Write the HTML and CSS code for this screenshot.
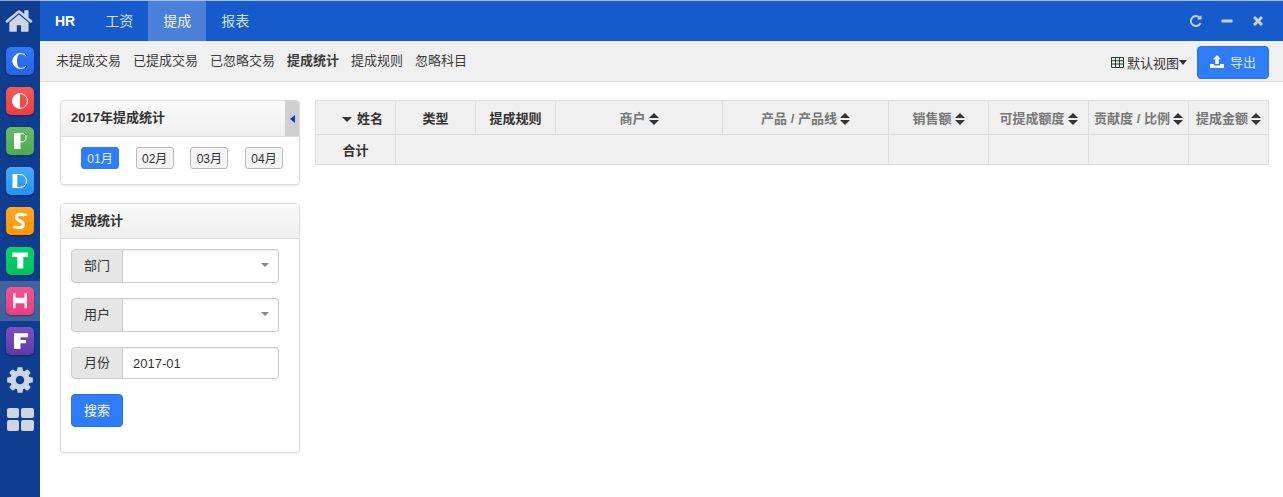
FILE: index.html
```html
<!DOCTYPE html>
<html lang="zh-CN">
<head>
<meta charset="utf-8">
<title>提成统计</title>
<link rel="stylesheet" href="styles.css">
</head>
<body>
<div class="app">
  <aside class="rail">
    <a class="rail-home">
      <svg class="home-icon" viewBox="0 0 1792 1792"><path d="M1408 992v480q0 26-19 45t-45 19h-384v-384h-256v384h-384q-26 0-45-19t-19-45v-480q0-1 .5-3t.5-3l575-474 575 474q1 2 1 6zm223-69l-62 74q-8 9-21 11h-3q-13 0-21-7l-692-577-692 577q-12 8-24 7-13-2-21-11l-62-74q-8-10-7-23.5t11-21.5l719-599q32-26 76-26t76 26l244 204v-195q0-14 9-23t23-9h192q14 0 23 9t9 23v408l219 182q10 8 11 21.5t-7 23.5z"/></svg>
    </a>
    <a class="rail-item"><span class="tile tile-blue"><svg viewBox="0 0 28 28"><path d="M20 9a7.500 7.500 0 1 0 0 10" class="ol"/><path d="M14 6.500a7.500 7.500 0 0 0 0 15c-2.500-1.500-3-4.500-3-7.500s.5-6 3-7.500z" class="fl"/></svg></span></a>
    <a class="rail-item"><span class="tile tile-red"><svg viewBox="0 0 28 28"><circle cx="14" cy="14" r="7.500" class="ol"/><path d="M14 6.500a7.500 7.500 0 0 0 0 15z" class="fl"/></svg></span></a>
    <a class="rail-item"><span class="tile tile-green"><svg viewBox="0 0 28 28"><rect x="8" y="6" width="6.500" height="16" class="fl"/><path d="M14 6.500h2a4.200 4.200 0 0 1 0 8.400h-2" class="ol"/></svg></span></a>
    <a class="rail-item"><span class="tile tile-sky"><svg viewBox="0 0 28 28"><rect x="6.500" y="7" width="4.800" height="14" class="fl"/><path d="M11 7.500h3a6.500 6.500 0 0 1 0 13h-3" class="ol"/></svg></span></a>
    <a class="rail-item"><span class="tile tile-orange"><svg viewBox="0 0 28 28"><path d="M18.500 8.500C15 6.500 10.500 7 10.500 10.500c0 4 7 3 7 7 0 3.500-5 4-8.500 2" class="st"/><circle cx="19.700" cy="7.800" r="1.200" class="fl"/><circle cx="8.300" cy="20.300" r="1.200" class="fl"/></svg></span></a>
    <a class="rail-item"><span class="tile tile-mint"><svg viewBox="0 0 28 28"><path d="M6 5.500h16v4.500h-4.700v11.500h-6V10H6z" class="fl"/></svg></span></a>
    <a class="rail-item rail-active"><span class="tile tile-pink"><svg viewBox="0 0 28 28"><path d="M7 6.300h2.600v15H7zM18.400 6.300H21v15h-2.600z" class="fl fl-soft"/><path d="M9 10.700h10v5.600H9z" class="fl"/></svg></span></a>
    <a class="rail-item"><span class="tile tile-purple"><svg viewBox="0 0 28 28"><path d="M8 6.300h14v4h-7.500v2.700H20v3.300h-5.500V22H8z" class="fl"/></svg></span></a>
    <a class="rail-item rail-item-cog">
      <svg class="cog-icon" viewBox="0 0 1792 1792"><path d="M1152 896q0-106-75-181t-181-75-181 75-75 181 75 181 181 75 181-75 75-181zm512-109v222q0 12-8 23t-20 13l-185 28q-19 54-39 91 35 50 107 138 10 12 10 25t-9 23q-27 37-99 108t-94 71q-12 0-26-9l-138-108q-44 23-91 38-16 136-29 186-7 28-36 28h-222q-14 0-24.500-8.500t-11.500-21.500l-28-184q-49-16-90-37l-141 107q-10 9-25 9-14 0-25-11-126-114-165-168-7-10-7-23 0-12 8-23 15-21 51-66.500t54-70.500q-27-50-41-99l-183-27q-13-2-21-12.500t-8-23.500v-222q0-12 8-23t19-13l186-28q14-46 39-92-40-57-107-138-10-12-10-24 0-10 9-23 26-36 98.500-107.500t94.500-71.500q13 0 26 10l138 107q44-23 91-38 16-136 29-186 7-28 36-28h222q14 0 24.500 8.500t11.500 21.500l28 184q49 16 90 37l142-107q9-9 24-9 13 0 25 10 129 119 165 170 7 8 7 22 0 12-8 23-15 21-51 66.500t-54 70.500q26 50 41 98l183 28q13 2 21 12.500t8 23.500z"/></svg>
    </a>
    <a class="rail-item">
      <span class="grid-icon"><i></i><i></i><i></i><i></i></span>
    </a>
  </aside>

  <div class="main">
    <header class="topbar">
      <span class="brand">HR</span>
      <nav class="tabs">
        <a class="tab">工资</a>
        <a class="tab tab-active">提成</a>
        <a class="tab">报表</a>
      </nav>
      <div class="win-ctrls">
        <svg class="win-icon" viewBox="0 0 14 14"><path d="M11.500 9a5 5 0 1 1 -.6-5" class="win-stroke"/><path d="M12.500 1v4.500H8z" class="win-fill"/></svg>
        <svg class="win-icon" viewBox="0 0 14 14"><rect x="1.500" y="5.500" width="11" height="3" rx=".5" class="win-fill"/></svg>
        <svg class="win-icon" viewBox="0 0 14 14"><path d="M3 3l8 8M11 3l-8 8" class="win-x"/></svg>
      </div>
    </header>

    <div class="subbar">
      <nav class="subnav">
        <a>未提成交易</a>
        <a>已提成交易</a>
        <a>已忽略交易</a>
        <a class="sub-active">提成统计</a>
        <a>提成规则</a>
        <a>忽略科目</a>
      </nav>
      <div class="sub-actions">
        <a class="view-switch">
          <svg class="table-icon" viewBox="0 0 13 11"><path d="M.5.500h12v10H.500zM.5 3.700h12M.5 7h12M4.500 .5v10M8.500 .5v10"/></svg>
          <span class="view-label">默认视图</span><i class="view-caret"></i>
        </a>
        <button class="btn-primary btn-export">
          <svg class="upload-icon" viewBox="0 0 14 13"><path d="M7 0l4 4.200H8.700V9H5.300V4.200H3z"/><path d="M0 9h4v1.500h6V9h4v4H0z"/></svg>
          <span>导出</span>
        </button>
      </div>
    </div>

    <div class="content">
      <div class="side">
        <section class="panel">
          <div class="panel-head panel-head-tall">2017年提成统计</div>
          <a class="collapse-toggle"><i></i></a>
          <div class="months">
            <button class="month month-on">01月</button>
            <button class="month">02月</button>
            <button class="month">03月</button>
            <button class="month">04月</button>
          </div>
        </section>

        <section class="panel">
          <div class="panel-head">提成统计</div>
          <div class="filter">
            <div class="field field-tall">
              <span class="addon">部门</span>
              <div class="control"><i class="select-caret"></i></div>
            </div>
            <div class="field field-tall">
              <span class="addon">用户</span>
              <div class="control"><i class="select-caret"></i></div>
            </div>
            <div class="field">
              <span class="addon">月份</span>
              <div class="control">2017-01</div>
            </div>
            <button class="btn-primary btn-search">搜索</button>
          </div>
        </section>
      </div>

      <table class="grid">
        <colgroup>
          <col class="c80"><col class="c80"><col class="c80"><col class="c167"><col class="c166"><col class="c100"><col class="c100"><col class="c100"><col class="c81">
        </colgroup>
        <thead>
          <tr>
            <th class="th-name"><i class="sort-down"></i>姓名</th>
            <th>类型</th>
            <th>提成规则</th>
            <th class="sortable">商户<i class="sort"></i></th>
            <th class="sortable">产品 / 产品线<i class="sort"></i></th>
            <th class="sortable">销售额<i class="sort"></i></th>
            <th class="sortable">可提成额度<i class="sort"></i></th>
            <th class="sortable">贡献度 / 比例<i class="sort"></i></th>
            <th class="sortable">提成金额<i class="sort"></i></th>
          </tr>
        </thead>
        <tbody>
          <tr>
            <td class="total-label">合计</td>
            <td colspan="4"></td>
            <td></td><td></td><td></td><td></td>
          </tr>
        </tbody>
      </table>
    </div>
  </div>
</div>
</body>
</html>
```

FILE: styles.css
```css
* { box-sizing: border-box; }
html, body { margin: 0; height: 100%; background: #fff; }
body {
  font-family: "Liberation Sans", "Noto Sans CJK SC", sans-serif;
  font-size: 13px;
  color: #333;
  overflow: hidden;
}
a { color: inherit; text-decoration: none; }

.app { display: flex; height: 497px; }

/* left rail */
.rail {
  width: 40px;
  flex: none;
  background: #0f3d8f;
  border-top: 1px solid #8fa6cc;
  display: flex;
  flex-direction: column;
}
.rail-home { height: 40px; flex: none; display: flex; align-items: center; justify-content: center; }
.home-icon { width: 30px; height: 30px; fill: #cdd5e2; margin-top: -1px; }
.rail-item { height: 40px; flex: none; display: flex; align-items: center; justify-content: center; }
.rail-item-cog { height: 38px; }
.rail-active { background: #3e639f; }
.tile {
  width: 28px;
  height: 28px;
  border-radius: 5px;
  box-shadow: 0 1px 2px rgba(0, 0, 0, .35);
  display: block;
}
.tile svg { display: block; width: 28px; height: 28px; }
.fl { fill: #fff; }
.fl-soft { opacity: .85; }
.ol { fill: none; stroke: #fff; stroke-width: 1; }
.st { fill: none; stroke: #fff; stroke-width: 3; }
.tile-blue { background: linear-gradient(#2f78fb, #2a62e6); }
.tile-red { background: linear-gradient(#f25a5a, #ec3f3f); }
.tile-green { background: linear-gradient(#66bb66, #4cab50); }
.tile-sky { background: linear-gradient(#45a9f5, #2592f5); }
.tile-orange { background: linear-gradient(#ffa726, #ff9500); }
.tile-mint { background: linear-gradient(#00d46a, #00c060); }
.tile-pink { background: linear-gradient(#f0558c, #e83e80); }
.tile-purple { background: linear-gradient(#7e4fc0, #5e3aa8); }
.cog-icon { width: 30px; height: 30px; fill: #cdd5e2; }
.grid-icon {
  width: 27px;
  height: 23px;
  display: grid;
  grid-template-columns: 1fr 1fr;
  grid-template-rows: 1fr 1fr;
  gap: 2px;
}
.grid-icon i { background: #cdd5e2; border-radius: 2px; }

/* top bar */
.main { flex: 1; min-width: 0; display: flex; flex-direction: column; }
.topbar {
  height: 41px;
  flex: none;
  background: #155bcc;
  border-top: 1px solid #a9bcdc;
  display: flex;
  align-items: stretch;
  color: #fff;
  font-size: 14px;
}
.brand { font-weight: bold; padding: 0 15px; line-height: 40px; }
.tabs { display: flex; }
.tab { padding: 0 15px; line-height: 40px; color: #d5dff2; width: 58px; text-align: center; }
.tab-active { background: #4a80d9; color: #f2f5fb; }
.win-ctrls { margin-left: auto; display: flex; align-items: center; gap: 17px; padding-right: 18px; }
.win-icon { width: 14px; height: 14px; display: block; }
.win-stroke { fill: none; stroke: #c5d2e8; stroke-width: 2; }
.win-fill { fill: #c5d2e8; }
.win-x { fill: none; stroke: #c5d2e8; stroke-width: 3; }

/* sub bar */
.subbar {
  height: 41px;
  flex: none;
  background: #f0f0f0;
  border-bottom: 1px solid #ddd;
  display: flex;
  align-items: flex-start;
  justify-content: space-between;
  padding: 0 14px 0 16px;
}
.subnav { display: flex; gap: 12px; line-height: 40px; }
.subnav a { color: #3c3c3c; white-space: nowrap; }
.sub-active { font-weight: bold; color: #333; }
.sub-actions { display: flex; align-items: flex-start; }
.view-switch { display: flex; align-items: center; height: 33px; margin-top: 5px; margin-right: 10px; color: #333; }
.view-label { padding-bottom: 1px; margin-left: -1px; }
.table-icon { width: 13px; height: 11px; margin-right: 4px; fill: none; stroke: #2f3a2f; stroke-width: 1; }
.view-caret {
  width: 0; height: 0;
  border-left: 4.500px solid transparent;
  border-right: 4.500px solid transparent;
  border-top: 5px solid #333;
}
.btn-primary {
  background: #2f7cf8;
  border: 1px solid #2a70e8;
  border-radius: 4px;
  color: #fff;
  font: inherit;
  padding: 0 0 2px;
}
.btn-export {
  width: 72px;
  height: 33px;
  margin-top: 5px;
  display: flex;
  align-items: center;
  justify-content: center;
  gap: 6px;
  color: #dbe7fb;
}
.upload-icon { width: 14px; height: 13px; fill: #fff; }

/* content */
.content { flex: 1; display: flex; align-items: flex-start; gap: 15px; padding: 18px 14px 0 20px; }
.side { width: 240px; flex: none; display: flex; flex-direction: column; gap: 18px; }
.panel {
  position: relative;
  background: #fff;
  border: 1px solid #ddd;
  border-radius: 4px;
  box-shadow: 0 1px 2px rgba(0, 0, 0, .08);
}
.panel-head {
  height: 35px;
  line-height: 33px;
  padding: 0 10px;
  font-weight: bold;
  color: #333;
  background: linear-gradient(#fafafa, #efefef);
  border-bottom: 1px solid #ddd;
  border-radius: 3px 3px 0 0;
}
.panel-head-tall { height: 36px; line-height: 34px; }
.collapse-toggle {
  position: absolute;
  top: 0;
  right: 0;
  width: 14px;
  height: 35px;
  background: #d0d0d0;
  border-top-right-radius: 3px;
  display: flex;
  align-items: center;
  justify-content: center;
}
.collapse-toggle i {
  width: 0; height: 0;
  border-top: 4.500px solid transparent;
  border-bottom: 4.500px solid transparent;
  border-right: 5px solid #1233cc;
}
.months { display: flex; justify-content: space-between; padding: 10px 16px 15px 20px; }
.month {
  width: 38px;
  height: 22px;
  padding: 0 0 1px;
  border: 1px solid #bbb;
  border-radius: 3px;
  background: #f4f4f4;
  font: inherit;
  font-size: 12px;
  color: #333;
}
.month-on { background: #2f7cf8; border-color: #2f7cf8; color: #eaf1fe; }

.filter { padding: 10px 20px 25px 10px; display: flex; flex-direction: column; align-items: flex-start; gap: 15px; }
.field { display: flex; width: 208px; height: 32px; }
.field-tall { height: 34px; }
.addon {
  width: 52px;
  flex: none;
  display: flex;
  align-items: center;
  justify-content: center;
  padding-bottom: 3px;
  background: #e6e6e6;
  border: 1px solid #ccc;
  border-radius: 4px 0 0 4px;
  color: #333;
}
.control {
  flex: 1;
  position: relative;
  display: flex;
  align-items: center;
  padding: 0 10px;
  background: #fff;
  border: 1px solid #ccc;
  border-left: 0;
  border-radius: 0 4px 4px 0;
  box-shadow: inset 0 1px 1px rgba(0, 0, 0, .075);
  color: #333;
}
.select-caret {
  position: absolute;
  right: 9px;
  top: 13px;
  width: 0; height: 0;
  border-left: 4px solid transparent;
  border-right: 4px solid transparent;
  border-top: 4px solid #888;
}
.btn-search { width: 52px; height: 33px; }

/* table */
.grid {
  width: 953px;
  table-layout: fixed;
  border-collapse: collapse;
  flex: none;
  background: #f0f0f0;
}
.grid th, .grid td { border: 1px solid #ddd; padding: 0; text-align: center; font-weight: bold; color: #333; white-space: nowrap; }
.grid th { height: 34px; }
.grid td { height: 30px; }
.grid .total-label { padding-bottom: 1px; }
.grid .th-name { text-align: right; padding-right: 12px; }
.grid .sortable { color: #777; }
.c80 { width: 80px; }
.c167 { width: 167px; }
.c166 { width: 166px; }
.c100 { width: 100px; }
.c81 { width: 80px; }
.sort-down {
  display: inline-block;
  vertical-align: middle;
  width: 0; height: 0;
  margin-right: 5px;
  border-left: 5px solid transparent;
  border-right: 5px solid transparent;
  border-top: 5px solid #333;
}
.sort {
  display: inline-block;
  vertical-align: middle;
  position: relative;
  width: 10px;
  height: 12px;
  margin-left: 3px;
  margin-top: -1px;
}
.sort::before, .sort::after {
  content: "";
  position: absolute;
  left: 0;
  width: 0; height: 0;
  border-left: 5px solid transparent;
  border-right: 5px solid transparent;
}
.sort::before { top: 0; border-bottom: 5.500px solid #333; }
.sort::after { bottom: 0; border-top: 5.500px solid #333; }
```
